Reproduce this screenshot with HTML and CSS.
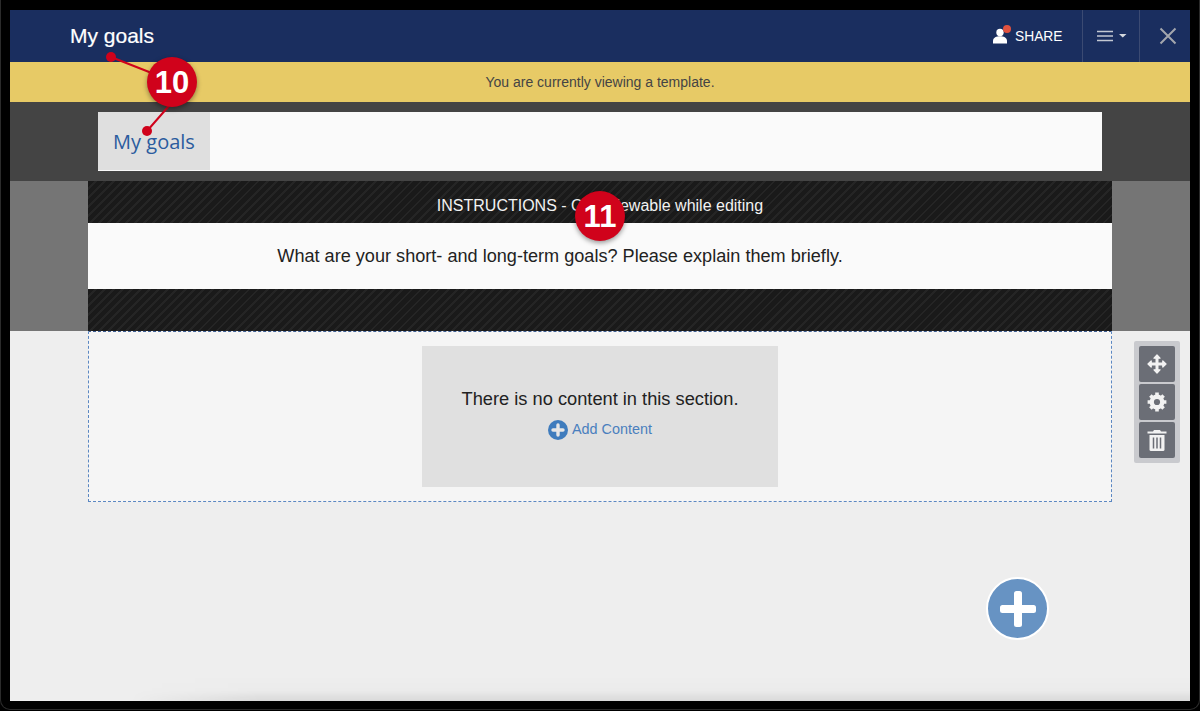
FILE: index.html
```html
<!DOCTYPE html>
<html lang="en">
	<head>
		<title>My goals</title>
		<meta charset="utf-8" />
		<link rel="stylesheet" href="styles.css">
	</head>
	<body>
		<div class="window">
			<header class="topbar">
				<div class="topbar-title">My goals</div>
				<div class="share">
					<svg class="share-icon" width="18" height="22" viewBox="0 0 18 22">
						<circle cx="7" cy="7.500" r="3.700" fill="#fff"/>
						<path d="M0 18.500v-2.500c0-3.500 3.500-4.800 7-4.800s7 1.300 7 4.800v2.500z" fill="#fff"/>
						<circle cx="14" cy="4" r="4" fill="#e2523f"/>
					</svg>
					<span>SHARE</span>
				</div>
				<div class="menu-btn">
					<svg width="30" height="12" viewBox="0 0 30 12">
						<path d="M0 1.500h16M0 6h16M0 10.500h16" stroke="#c3c8d2" stroke-width="1.600"/>
						<path d="M22 4h7.500l-3.750 3.500z" fill="#d5d8de"/>
					</svg>
				</div>
				<div class="close-btn">
					<svg width="18" height="18" viewBox="0 0 18 18">
						<path d="M1.500 1.500l15 15M16.500 1.500l-15 15" stroke="#a3a6ad" stroke-width="2"/>
					</svg>
				</div>
			</header>
			<div class="notice">You are currently viewing a template.</div>
			<div class="tabstrip">
				<div class="tabs">
					<div class="tab">My goals</div>
				</div>
			</div>
			<section class="instructions">
				<div class="instructions-inner">
					<div class="stripes stripes-head">INSTRUCTIONS - Only viewable while editing</div>
					<div class="instructions-text">What are your short- and long-term goals? Please explain them briefly.</div>
					<div class="stripes stripes-foot"></div>
				</div>
			</section>
			<main class="content">
				<div class="section-row">
					<div class="section">
						<div class="empty">
							<p class="empty-text">There is no content in this section.</p>
							<a class="add-link">
								<svg width="20" height="20" viewBox="0 0 20 20">
									<circle cx="10" cy="10" r="10" fill="#3f7cbd"/>
									<path d="M10 5v10M5 10h10" stroke="#e6e6e6" stroke-width="3.400" stroke-linecap="round"/>
								</svg>
								<span>Add Content</span>
							</a>
						</div>
					</div>
					<div class="tools">
						<div class="tool">
							<svg width="20" height="20" viewBox="0 0 20 20">
								<path d="M10 3v14M3 10h14" stroke="#f2f2f2" stroke-width="3"/>
								<path d="M10 1l3 3.200H7zM10 19l3-3.200H7zM1 10l3.200-3v6zM19 10l-3.200-3v6z" fill="#f2f2f2" stroke="#f2f2f2" stroke-width="1.300" stroke-linejoin="round"/>
							</svg>
						</div>
						<div class="tool">
							<svg width="20" height="20" viewBox="0 0 20 20">
								<circle cx="10" cy="10" r="7.400" fill="#f2f2f2"/>
								<path d="M10 .6v18.800M.6 10h18.800M3.400 3.400l13.200 13.200M16.600 3.400L3.400 16.600" stroke="#f2f2f2" stroke-width="3.600"/>
								<circle cx="10" cy="10" r="3.100" fill="#6b6e76"/>
							</svg>
						</div>
						<div class="tool">
							<svg width="20" height="22" viewBox="0 0 20 22">
								<path d="M7 1h6l1 1.500h5.500v2H.5v-2H6z" fill="#f2f2f2"/>
								<path d="M2.500 6h15v14.500a1.500 1.500 0 0 1-1.500 1.500H4a1.500 1.500 0 0 1-1.500-1.500z" fill="#f2f2f2"/>
								<path d="M6.500 8.500v11M10 8.500v11M13.500 8.500v11" stroke="#6b6e76" stroke-width="1.500"/>
							</svg>
						</div>
					</div>
				</div>
				<button class="fab">
					<svg width="36" height="36" viewBox="0 0 36 36" fill="#fff">
						<rect x="14" y="0" width="8" height="36" rx="2.500"/>
						<rect x="0" y="14" width="36" height="8" rx="2.500"/>
					</svg>
				</button>
				<div class="bottom-shade"></div>
			</main>
		</div>

		<!-- callouts over the screenshot -->
		<svg class="callout-lines" width="1200" height="711" viewBox="0 0 1200 711">
			<path d="M111 57L172 81M147 131L175 99" fill="none" stroke="#d0021b" stroke-width="2"/>
			<circle cx="111" cy="57" r="5" fill="#d0021b"/>
			<circle cx="147" cy="131" r="5" fill="#d0021b"/>
		</svg>
		<div class="badge badge-10">10</div>
		<div class="badge badge-11">11</div>
	</body>
</html>
```
FILE: styles.css
```css
* {
	box-sizing: border-box;
}
html, body {
	margin: 0;
	height: 100%;
	overflow: hidden;
}
body {
	position: relative;
	padding: 10px;
	background: #000;
	font-family: "Liberation Sans", Arial, sans-serif;
	color: #222;
}
/* thin bezel line of the captured window */
body::after {
	content: "";
	position: absolute;
	top: 0;
	left: 0;
	right: 0;
	bottom: 1px;
	border: 1px solid #2b2b2b;
	border-top: 0;
	border-radius: 0 0 10px 10px;
	pointer-events: none;
}
.window {
	display: flex;
	flex-direction: column;
	height: 691px;
	background: #eee;
	overflow: hidden;
}

.topbar {
	display: flex;
	align-items: stretch;
	flex: 0 0 52px;
	background: #1a2e5f;
	color: #fff;
}
.topbar-title {
	flex: 1;
	padding-left: 60px;
	font-size: 21px;
	line-height: 52px;
	-webkit-text-stroke: 0.2px #fff;
}
.share {
	display: flex;
	align-items: center;
	width: 89px;
	font-size: 13.800px;
}
.share span {
	margin-top: 1px;
}
.share-icon {
	margin-right: 4px;
}
.menu-btn, .close-btn {
	display: flex;
	align-items: center;
	justify-content: center;
	border-left: 1px solid #3b4a72;
}
.menu-btn {
	width: 57px;
	padding-left: 2px;
}
.close-btn {
	width: 51px;
	padding-left: 5px;
}

.notice {
	flex: 0 0 40px;
	background: #e7ca66;
	color: #444;
	font-size: 14px;
	line-height: 40px;
	text-align: center;
}

.tabstrip {
	flex: 0 0 79px;
	padding: 10px 88px;
	background: #444;
}
.tabs {
	display: flex;
	height: 59px;
	background: #fafafa;
}
.tab {
	width: 112px;
	height: 58px;
	background: #dfdfdf;
	color: #2b5c9e;
	font-family: "Open Sans", sans-serif;
	font-size: 20px;
	line-height: 60px;
	text-align: center;
}

.instructions {
	flex: 0 0 150px;
	padding: 0 78px;
	background: #757575;
}
.stripes {
	height: 42px;
	background: repeating-linear-gradient(135deg, #1a1a1a 0, #1a1a1a 4.400px, #252525 4.400px, #252525 6.400px);
}
.stripes-head {
	color: #f2f2f2;
	font-size: 16px;
	line-height: 49px;
	text-align: center;
}
.instructions-text {
	height: 66px;
	padding-right: 80px;
	background: #fafafa;
	font-size: 18.130px;
	line-height: 67px;
	text-align: center;
}

.content {
	position: relative;
	flex: 1;
	background: #eee;
}
.section-row {
	display: flex;
	align-items: flex-start;
	padding-left: 78px;
}
.section {
	width: 1024px;
	height: 171px;
	padding-top: 14px;
	background: #f5f5f5;
	border: 1px dashed #5b87c2;
	border-top-color: #3f5f94;
}
.empty {
	width: 356px;
	height: 141px;
	margin: 0 auto;
	padding-top: 43px;
	background: #e0e0e0;
	text-align: center;
}
.empty-text {
	margin: 0;
	font-size: 18.250px;
	line-height: 20px;
	color: #222;
}
.add-link {
	display: flex;
	align-items: center;
	justify-content: center;
	gap: 4px;
	margin-top: 11px;
	color: #4a7fbe;
	font-size: 14.400px;
}
.add-link span {
	margin-top: -3px;
}

.tools {
	display: flex;
	flex-direction: column;
	gap: 2px;
	margin: 10px 0 0 22px;
	padding: 5px;
	background: #c9cace;
	border-radius: 2px;
}
.tool {
	display: flex;
	align-items: center;
	justify-content: center;
	width: 36px;
	height: 36px;
	background: #6b6e76;
	border-radius: 2px;
}

/* floats over the page */
.fab {
	position: absolute;
	left: 976px;
	top: 246px;
	display: flex;
	align-items: center;
	justify-content: center;
	width: 63px;
	height: 63px;
	padding: 0;
	background: #6793c3;
	border: 2px solid #fff;
	border-radius: 50%;
}
.bottom-shade {
	position: absolute;
	left: 120px;
	right: 0;
	bottom: 0;
	height: 26px;
	background: linear-gradient(to bottom, rgba(0,0,0,0), rgba(0,0,0,0.012) 60%, rgba(0,0,0,0.085));
	-webkit-mask-image: linear-gradient(to right, transparent, #000 130px);
	mask-image: linear-gradient(to right, transparent, #000 130px);
}

.callout-lines {
	position: absolute;
	top: 0;
	left: 0;
	pointer-events: none;
}
.badge {
	position: absolute;
	width: 50px;
	height: 50px;
	background: #d0021b;
	border-radius: 50%;
	box-shadow: 0 2px 5px rgba(0,0,0,0.4);
	color: #fff;
	font-size: 31px;
	font-weight: 700;
	line-height: 51px;
	text-align: center;
}
.badge-10 {
	left: 147px;
	top: 57px;
}
.badge-11 {
	left: 575px;
	top: 191px;
}
```
